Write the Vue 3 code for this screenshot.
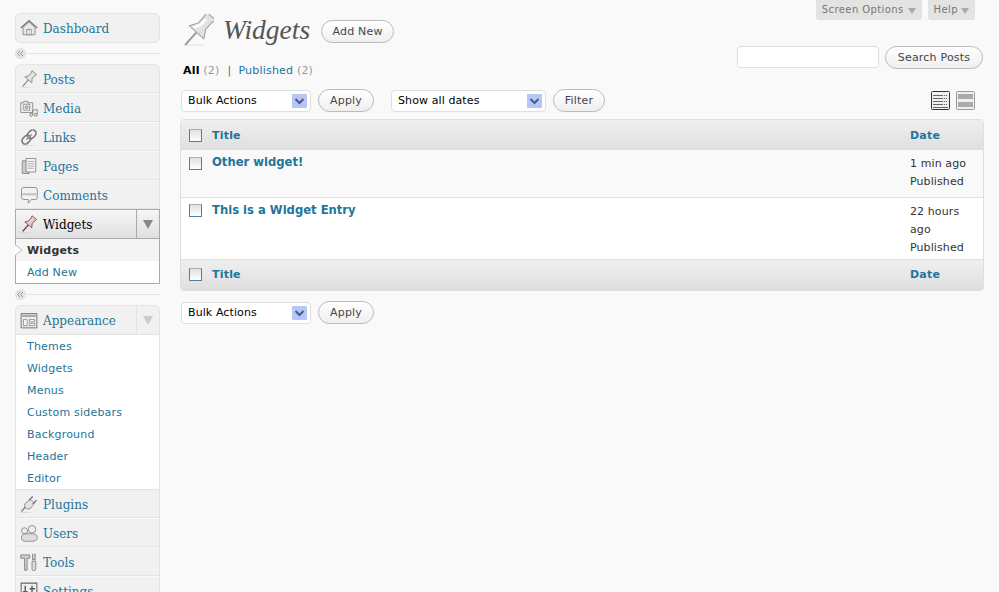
<script setup>
import { h, ref } from 'vue'

// icon shapes, drawn on a 24x24 box
const stroke = '#777'
const pinBody = 'M8 1 H16 L15 4 V9 L18 13.5 H6 L9 9 V4 Z'
const pin = [
  { d: 'M1 23.5 H14', stroke: '#d4d4d4', w: 1 },
  { d: 'M12 13 V25', stroke: '#888', w: 1.6, t: 'rotate(40 12 12)' },
  { d: pinBody, fill: '#e2e2e2', stroke, t: 'rotate(40 12 12)' }
]
const icons = {
  home: [
    { d: 'M4 11 L12 4 L20 11 V21 H4 Z', fill: '#e8e8e8', stroke },
    { d: 'M1 12 L12 2 L23 12', stroke, w: 1.6 },
    { d: 'M9 21 V14 H15 V21 Z', fill: '#fff', stroke },
    { d: 'M12 14 V21', stroke: '#999' }
  ],
  posts: pin,
  media: [
    { d: 'M1 5 H5 V3 H10 V5 H17 V18 H1 Z', fill: '#eee', stroke },
    { d: 'M5 7 H13 V15 H5 Z', fill: '#fff', stroke },
    { d: 'M7 11 a2 2 0 1 0 4 0 a2 2 0 1 0 -4 0', fill: '#ccc', stroke },
    { d: 'M17 15 V21 M23 14 V21 M17 15 L23 14', stroke },
    { d: 'M13 21 a2 2 0 1 0 4 0 a2 2 0 1 0 -4 0 M19 21 a2 2 0 1 0 4 0 a2 2 0 1 0 -4 0', fill: '#ddd', stroke }
  ],
  links: [
    { d: 'M2 23.5 H18', stroke: '#d4d4d4' },
    { d: 'M5 7.500 H9 a4.500 4.500 0 0 1 0 9 H5 a4.500 4.500 0 0 1 0 -9 Z', stroke, w: 2, t: 'rotate(-45 12 12)' },
    { d: 'M15 7.500 H19 a4.500 4.500 0 0 1 0 9 H15 a4.500 4.500 0 0 1 0 -9 Z', stroke, w: 2, t: 'rotate(-45 12 12)' },
    { d: 'M7 12 H17', stroke: '#999', w: 2, t: 'rotate(-45 12 12)' }
  ],
  pages: [
    { d: 'M3 5 H12 V22 H3 Z', fill: '#ccc', stroke },
    { d: 'M8 2 H21 V20 H8 Z', fill: '#f4f4f4', stroke },
    { d: 'M10 6 H19 M10 9 H19 M10 12 H19 M10 15 H19', stroke: '#999' }
  ],
  comments: [
    { d: 'M5 2 H20 Q23 2 23 5 V15 Q23 18 20 18 H15 L11 23 V18 H5 Q2 18 2 15 V5 Q2 2 5 2 Z', fill: '#f2f2f2', stroke },
    { d: 'M3 11 H22', stroke: '#c4c4c4', w: 3 }
  ],
  widgets: [
    { d: 'M1 23.5 H14', stroke: '#e4c4c4', w: 1 },
    { d: 'M12 13 V25', stroke: '#533', w: 1.6, t: 'rotate(40 12 12)' },
    { d: pinBody, fill: '#ecc9c9', stroke: '#644', t: 'rotate(40 12 12)' }
  ],
  appearance: [
    { d: 'M1.5 3.5 H22.5 V22.5 H1.5 Z', fill: '#eee', stroke: '#666', w: 1.2 },
    { d: 'M3 5 H21 V8 H3 Z', fill: '#aaa' },
    { d: 'M4.5 11.5 H9.5 V19.5 H4.5 Z M12.5 11.5 H19.5 V14.5 H12.5 Z M12.5 16.5 H19.5 V19.5 H12.5 Z', fill: '#fff', stroke }
  ],
  plugins: [
    { d: 'M1 23.5 H14', stroke: '#d4d4d4' },
    { d: 'M2 22 L8 15', stroke, w: 1.6 },
    { d: 'M7 11 L14 6 L19 11 L14 18 Q10 20 7 17 Q5 14 7 11 Z', fill: '#e4e4e4', stroke },
    { d: 'M12 7 L17 2 M17 12 L22 7', stroke, w: 1.8 }
  ],
  users: [
    { d: 'M2 9 a4 4 0 1 0 8 0 a4 4 0 1 0 -8 0 M11 7 a5 5 0 1 0 10 0 a5 5 0 1 0 -10 0', fill: '#eee', stroke },
    { d: 'M2 18 Q2 13 8 13 H16 Q23 13 23 18 Q23 23 16 23 H8 Q2 23 2 18 Z', fill: '#ddd', stroke }
  ],
  tools: [
    { d: 'M1 2.5 H13 V7 H9.5 V23 H6 V7 H1 Z', fill: '#ccc', stroke },
    { d: 'M17 1 V9 H20 V1', stroke, w: 1.4 },
    { d: 'M16 11 H21 V21 Q21 23.5 18.5 23.5 Q16 23.5 16 21 Z', fill: '#ddd', stroke }
  ],
  settings: [
    { d: 'M1.5 1.5 H22.5 V22.5 H1.5 Z', fill: '#eee', stroke: '#666', w: 1.4 },
    { d: 'M7 5 V19 M16 5 V19 M13 9 H20 M4 13 H10', stroke: '#555', w: 1.8 }
  ]
}

// renders one of the shapes above
const Ico = (props) =>
  h('svg', { class: props.cls, viewBox: '0 0 24 24' },
    icons[props.name].map((p) =>
      h('path', { d: p.d, fill: p.fill || 'none', stroke: p.stroke, 'stroke-width': p.w || 1, transform: p.t })
    )
  )
Ico.props = ['name', 'cls']

const mainMenu = [
  { label: 'Posts', icon: 'posts' },
  { label: 'Media', icon: 'media' },
  { label: 'Links', icon: 'links' },
  { label: 'Pages', icon: 'pages' },
  { label: 'Comments', icon: 'comments' }
]
const appearanceLinks = ['Themes', 'Widgets', 'Menus', 'Custom sidebars', 'Background', 'Header', 'Editor']
const lowerMenu = [
  { label: 'Plugins', icon: 'plugins' },
  { label: 'Users', icon: 'users' },
  { label: 'Tools', icon: 'tools' },
  { label: 'Settings', icon: 'settings' }
]

const rows = ref([
  { title: 'Other widget!', when: '1 min ago', alt: true },
  { title: 'This is a Widget Entry', when: '22 hours ago', alt: false }
])
</script>

<template>
  <div class="page">
    <aside class="sidebar">
      <div class="group">
        <a class="item solo">
          <Ico name="home" cls="ico" />
          <span>Dashboard</span>
        </a>
      </div>
      <div class="sep">
        <span class="sep-knob"><svg viewBox="0 0 11 11"><path d="M5 3 L2.5 5.5 L5 8 M8 3 L5.5 5.5 L8 8" fill="none" stroke="#999" /></svg></span>
      </div>

      <div class="group">
        <a v-for="m in mainMenu" :key="m.label" class="item">
          <Ico :name="m.icon" cls="ico" />
          <span>{{ m.label }}</span>
        </a>
        <div class="active-block">
          <a class="item current">
            <Ico name="widgets" cls="ico" />
            <span>Widgets</span>
            <i class="toggle"><b class="tri"></b></i>
          </a>
          <div class="sub">
            <a class="sub-link here">Widgets
              <svg class="here-arrow" viewBox="0 0 8 12"><path d="M0 0.5 L7 6 L0 11.5" fill="#fff" stroke="#bbb" /></svg>
            </a>
            <a class="sub-link">Add New</a>
          </div>
        </div>
      </div>
      <div class="sep">
        <span class="sep-knob"><svg viewBox="0 0 11 11"><path d="M5 3 L2.5 5.5 L5 8 M8 3 L5.5 5.5 L8 8" fill="none" stroke="#999" /></svg></span>
      </div>

      <div class="group open">
        <a class="item solo">
          <Ico name="appearance" cls="ico" />
          <span>Appearance</span>
          <i class="toggle pale"><b class="tri"></b></i>
        </a>
        <div class="sub plain">
          <a v-for="l in appearanceLinks" :key="l" class="sub-link">{{ l }}</a>
        </div>
        <a v-for="m in lowerMenu" :key="m.label" class="item">
          <Ico :name="m.icon" cls="ico" />
          <span>{{ m.label }}</span>
        </a>
      </div>
    </aside>

    <main class="content">
      <div class="tabs">
        <div class="tab">Screen Options<b class="tab-tri"></b></div>
        <div class="tab">Help<b class="tab-tri"></b></div>
      </div>

      <div class="title-row">
        <svg class="big-pin" viewBox="0 0 32 32">
          <path d="M1 31.5 H22" stroke="#ddd" fill="none" />
          <g transform="rotate(42 17 15)">
            <path d="M17 20 V37" stroke="#999" stroke-width="2" fill="none" />
            <path d="M10.500 -3 H23.500 L22 2 V11 L27 19.500 H7 L12 11 V2 Z" fill="#e2e2e2" stroke="#999" />
            <path d="M15 3 V11 L11.500 18" stroke="#fff" stroke-width="2.500" fill="none" />
          </g>
        </svg>
        <h2>Widgets</h2>
        <a class="btn add-new">Add New</a>
      </div>

      <div class="search-row">
        <input class="search" type="text" />
        <a class="btn search-btn">Search Posts</a>
      </div>

      <div class="filters">
        <b>All</b> <span class="count">(2)</span><span class="bar">|</span><a>Published</a> <span class="count">(2)</span>
      </div>

      <div class="actions">
        <div class="select bulk">Bulk Actions<i class="sel-arrow"><svg viewBox="0 0 15 14"><path d="M3.500 5 L7.500 9 L11.500 5" fill="none" stroke="#4a5a8a" stroke-width="2" /></svg></i></div>
        <a class="btn apply">Apply</a>
        <div class="select dates">Show all dates<i class="sel-arrow"><svg viewBox="0 0 15 14"><path d="M3.500 5 L7.500 9 L11.500 5" fill="none" stroke="#4a5a8a" stroke-width="2" /></svg></i></div>
        <a class="btn filter">Filter</a>
        <div class="views">
          <svg class="view" viewBox="0 0 19 19">
            <rect x="0.500" y="0.500" width="18" height="18" rx="1" fill="#f0f0f0" stroke="#333" />
            <path d="M2 4.500 H17 M2 7.500 H17 M2 10.500 H17 M2 13.500 H17 M2 16.500 H17" stroke="#666" />
            <path d="M12 4.500 H17 M12 7.500 H17 M12 10.500 H17 M12 13.500 H17" stroke="#ddd" stroke-dasharray="1 1" />
          </svg>
          <svg class="view" viewBox="0 0 19 19">
            <rect x="0.500" y="0.500" width="18" height="18" rx="1" fill="#eee" stroke="#999" />
            <path d="M2 3 H17 V8 H2 Z M2 11 H17 V16 H2 Z" fill="#aaa" />
          </svg>
        </div>
      </div>

      <table class="list">
        <thead>
          <tr>
            <th class="check"><input type="checkbox" class="cb" /></th>
            <th class="name">Title</th>
            <th class="date">Date</th>
          </tr>
        </thead>
        <tbody>
          <tr v-for="r in rows" :key="r.title" :class="{ alt: r.alt }">
            <td class="check"><input type="checkbox" class="cb" /></td>
            <td class="name"><a>{{ r.title }}</a></td>
            <td class="date">{{ r.when }}<br />Published</td>
          </tr>
        </tbody>
        <tfoot>
          <tr>
            <th class="check"><input type="checkbox" class="cb" /></th>
            <th class="name">Title</th>
            <th class="date">Date</th>
          </tr>
        </tfoot>
      </table>

      <div class="actions bottom">
        <div class="select bulk">Bulk Actions<i class="sel-arrow"><svg viewBox="0 0 15 14"><path d="M3.500 5 L7.500 9 L11.500 5" fill="none" stroke="#4a5a8a" stroke-width="2" /></svg></i></div>
        <a class="btn apply">Apply</a>
      </div>
    </main>
  </div>
</template>

<style>
html, body {
  margin: 0;
  background: #f9f9f9;
  overflow: hidden;
}
</style>

<style scoped>
.page {
  display: flex;
  height: 592px;
  overflow: hidden;
  background: #f9f9f9;
  font-family: "DejaVu Sans", sans-serif;
  font-size: 11px;
  color: #333;
}

.sidebar {
  width: 145px;
  margin: 13px 21px 0 15px;
  flex: none;
}

.group {
  border: 1px solid #e3e3e3;
  border-radius: 6px;
  background: #f1f1f1;
}
.group.open {
  border-bottom: 0;
  border-radius: 6px 6px 0 0;
}

.item {
  display: flex;
  align-items: center;
  height: 27px;
  border-bottom: 1px solid #e3e3e3;
  border-top: 1px solid #f9f9f9;
  font-family: "DejaVu Serif", serif;
  font-size: 12px;
  color: #21759b;
  position: relative;
}
.group > .item:first-child { border-top: 0; }
.group > .item.solo { height: 28px; }
.group:first-child > .item.solo { border-bottom: 0; }
.sub.plain + .item { border-top: 0; }
.item span {
  margin-left: 5px;
  margin-top: 2px;
}
.ico {
  width: 18px;
  height: 18px;
  margin-left: 4px;
  flex: none;
}

.active-block {
  margin: 0 -1px -1px;
  border: 1px solid #aaa;
  background: #fff;
}
.item.current {
  height: 28px;
  border: 0;
  border-bottom: 1px solid #aaa;
  background: linear-gradient(#f6f6f6, #e0e0e0);
  color: #000;
}
.toggle {
  position: absolute;
  right: 0;
  top: 0;
  bottom: 0;
  width: 22px;
  border-left: 1px solid #aaa;
  display: flex;
  align-items: center;
  justify-content: center;
}
.toggle.pale { border-left-color: #e3e3e3; }
.tri {
  width: 0;
  height: 0;
  border-left: 5px solid transparent;
  border-right: 5px solid transparent;
  border-top: 9px solid #888;
}
.pale .tri { border-top-color: #ccc; }

.sub {
  background: #fff;
  display: flex;
  flex-direction: column;
}
.sub.plain {
  border-bottom: 1px solid #e3e3e3;
}
.sub-link {
  height: 22px;
  line-height: 24px;
  padding-left: 11px;
  color: #21759b;
  position: relative;
  letter-spacing: 0.2px;
}
.sub-link.here {
  font-weight: bold;
  color: #333;
  background: #f5f5f5;
}
.here-arrow {
  position: absolute;
  left: -1px;
  top: 5px;
  width: 8px;
  height: 12px;
}

.sep {
  height: 21px;
  display: flex;
  align-items: center;
  background: linear-gradient(#e3e3e3, #e3e3e3) left 8px center / calc(100% - 8px) 1px no-repeat;
}
.sep-knob {
  width: 11px;
  height: 11px;
  border-radius: 50%;
  background: #e3e3e3;
}
.sep-knob svg { display: block; }

.content {
  position: relative;
  width: 803px;
  flex: none;
}

.tabs {
  position: absolute;
  top: 0;
  right: 9px;
  display: flex;
  gap: 6px;
}
.tab {
  height: 20px;
  line-height: 19px;
  padding: 0 6px;
  background: #e3e3e3;
  border-radius: 0 0 3px 3px;
  color: #777;
  font-size: 10px;
  letter-spacing: 0.4px;
}
.tab-tri {
  display: inline-block;
  margin-left: 3px;
  width: 0;
  height: 0;
  vertical-align: -1px;
  border-left: 4px solid transparent;
  border-right: 4px solid transparent;
  border-top: 6px solid #aaa;
}
.tab:first-child .tab-tri { margin-left: 4px; }

.title-row {
  display: flex;
  align-items: center;
  height: 46px;
  padding-top: 7px;
  margin-left: 2px;
}
.big-pin {
  width: 31px;
  height: 32px;
  flex: none;
}
h2 {
  margin: 0 0 0 9px;
  font-family: "Liberation Serif", serif;
  font-style: italic;
  font-weight: normal;
  font-size: 27.500px;
  line-height: 32px;
  color: #555;
}

.btn {
  display: inline-block;
  box-sizing: border-box;
  height: 23px;
  line-height: 21px;
  border: 1px solid #bbb;
  border-radius: 12px;
  background: linear-gradient(#fff, #efefef);
  color: #464646;
  text-align: center;
  letter-spacing: 0.2px;
}
.add-new {
  width: 73px;
  margin-left: 11px;
  margin-top: 2px;
}

.search-row {
  position: absolute;
  top: 46px;
  right: 1px;
  display: flex;
  gap: 6px;
}
.search {
  width: 142px;
  height: 22px;
  box-sizing: border-box;
  border: 1px solid #dfdfdf;
  border-radius: 4px;
  background: #fff;
  padding: 0;
  margin: 0;
}
.search-btn { width: 98px; }

.filters {
  margin: 9px 0 9px 2px;
  height: 18px;
  line-height: 18px;
  color: #333;
  letter-spacing: 0.2px;
}
.filters b { color: #000; }
.filters a { color: #21759b; }
.count { color: #999; }
.bar { margin: 0 7px 0 8px; color: #666; }

.actions {
  display: flex;
  align-items: center;
  height: 23px;
}
.select {
  position: relative;
  box-sizing: border-box;
  height: 22px;
  line-height: 20px;
  padding-left: 6px;
  border: 1px solid #dfdfdf;
  border-radius: 4px;
  background: #fff;
  color: #000;
  letter-spacing: 0.1px;
}
.bulk { width: 130px; }
.dates { width: 155px; margin-left: 17px; }
.sel-arrow {
  position: absolute;
  right: 3px;
  top: 3px;
  width: 15px;
  height: 14px;
  background: #b7c7f5;
  border-radius: 1px;
}
.sel-arrow svg { display: block; width: 15px; height: 14px; }
.apply { width: 56px; margin-left: 7px; }
.filter { width: 52px; margin-left: 7px; }

.views {
  margin-left: auto;
  display: flex;
  gap: 6px;
  margin-right: 9px;
}
.view { width: 19px; height: 19px; display: block; }

.list {
  width: 804px;
  margin: 7px 0 0 -1px;
  border: 1px solid #dfdfdf;
  border-radius: 4px;
  border-spacing: 0;
  border-collapse: separate;
  table-layout: fixed;
  background: #fff;
}
.list th {
  height: 30px;
  padding: 0;
  text-align: left;
  color: #21759b;
  font-weight: bold;
  background: linear-gradient(#efefef, #dfdfdf);
  letter-spacing: 0.2px;
}
.list tfoot th {
  height: 28px;
  padding-bottom: 2px;
  border-top: 1px solid #dfdfdf;
}
.list td {
  padding: 5px 0 2px;
  vertical-align: top;
  line-height: 18px;
  border-top: 1px solid #dfdfdf;
}
.list tbody tr:first-child td { border-top: 0; }
.list tr.alt td {
  background: #f9f9f9;
  padding-bottom: 6px;
}
.list td.name { padding-top: 3px; }
.name a {
  color: #21759b;
  font-weight: bold;
  font-size: 11.600px;
}
.date {
  width: 63px;
  padding-right: 10px !important;
  letter-spacing: 0.1px;
}
.list th.check, .list td.check {
  width: 23px;
  padding-left: 8px;
}
.cb {
  appearance: none;
  display: block;
  width: 13px;
  height: 13px;
  margin: 0;
  border: 1px solid #557e9c;
  border-top-color: #a8b0b8;
  background: linear-gradient(#e0e0e0, #fff);
  box-sizing: border-box;
}
td .cb { margin-top: 1px; }
.alt td .cb { margin-top: 2px; }

.actions.bottom { margin-top: 10px; }
</style>
